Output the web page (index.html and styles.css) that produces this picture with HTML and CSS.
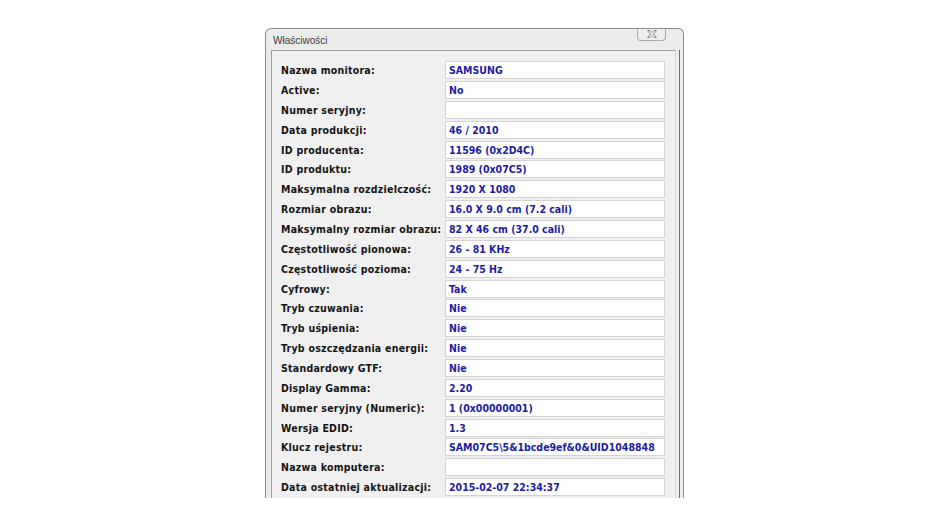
FILE: index.html
```html
<html>
<head>
    <link rel="stylesheet" href="styles.css">
    <title>Właściwości</title>
</head>
<body>
    <div class="page">
        <div class="window">
            <div class="titlebar">
                <span class="title">Właściwości</span>
                <div class="closebtn">
                    <svg width="12" height="10" viewBox="0 0 12 10">
                        <path d="M1.5 1.5 L4 1.5 L6 3.5 L8 1.5 L10.5 1.5 L7.5 5 L10.5 8.5 L8 8.5 L6 6.5 L4 8.5 L1.5 8.5 L4.5 5 Z" fill="none" stroke="#8a8a8a" stroke-width="1"/>
                    </svg>
                </div>
            </div>
            <div class="panel">
                <div class="props">
                    <div class="lbl">Nazwa monitora:</div><div class="val">SAMSUNG</div>
                    <div class="lbl">Active:</div><div class="val">No</div>
                    <div class="lbl">Numer seryjny:</div><div class="val"></div>
                    <div class="lbl">Data produkcji:</div><div class="val">46 / 2010</div>
                    <div class="lbl">ID producenta:</div><div class="val">11596 (0x2D4C)</div>
                    <div class="lbl">ID produktu:</div><div class="val">1989 (0x07C5)</div>
                    <div class="lbl">Maksymalna rozdzielczość:</div><div class="val">1920 X 1080</div>
                    <div class="lbl">Rozmiar obrazu:</div><div class="val">16.0 X 9.0 cm (7.2 cali)</div>
                    <div class="lbl">Maksymalny rozmiar obrazu:</div><div class="val">82 X 46 cm (37.0 cali)</div>
                    <div class="lbl">Częstotliwość pionowa:</div><div class="val">26 - 81 KHz</div>
                    <div class="lbl">Częstotliwość pozioma:</div><div class="val">24 - 75 Hz</div>
                    <div class="lbl">Cyfrowy:</div><div class="val">Tak</div>
                    <div class="lbl">Tryb czuwania:</div><div class="val">Nie</div>
                    <div class="lbl">Tryb uśpienia:</div><div class="val">Nie</div>
                    <div class="lbl">Tryb oszczędzania energii:</div><div class="val">Nie</div>
                    <div class="lbl">Standardowy GTF:</div><div class="val">Nie</div>
                    <div class="lbl">Display Gamma:</div><div class="val">2.20</div>
                    <div class="lbl">Numer seryjny (Numeric):</div><div class="val">1 (0x00000001)</div>
                    <div class="lbl">Wersja EDID:</div><div class="val">1.3</div>
                    <div class="lbl">Klucz rejestru:</div><div class="val">SAM07C5\5&amp;1bcde9ef&amp;0&amp;UID1048848</div>
                    <div class="lbl">Nazwa komputera:</div><div class="val"></div>
                    <div class="lbl">Data ostatniej aktualizacji:</div><div class="val">2015-02-07 22:34:37</div>
                </div>
            </div>
        </div>
    </div>
</body>
</html>
```

FILE: styles.css
```css
body
{
    margin: 0;
    background: #ffffff;
}
.page
{
    padding: 28px 0 0 265px;
    height: 520px;
    box-sizing: border-box;
    overflow: hidden;
}
.window
{
    width: 419px;
    height: 470px;
    box-sizing: border-box;
    background: #ececec;
    border: 1px solid #8c8c8c;
    border-bottom: none;
    border-radius: 6px 6px 0 0;
    padding: 0 7px 0 5px;
    overflow: hidden;
    display: flex;
    flex-direction: column;
}
.titlebar
{
    height: 22px;
    display: flex;
    justify-content: space-between;
    align-items: flex-start;
    padding-left: 2px;
}
.title
{
    font-family: "Liberation Sans", sans-serif;
    font-size: 10px;
    color: #3a3a3a;
    margin-top: 6px;
}
.closebtn
{
    width: 27px;
    height: 12px;
    margin-top: -1px;
    margin-right: 10px;
    border: 1px solid #a8a8a8;
    border-top: none;
    border-radius: 0 0 4px 4px;
    background: #eeeeee;
    display: flex;
    align-items: center;
    justify-content: center;
}
.panel
{
    flex: 1;
    background: #f0f0f0;
    border: 1px solid #a0a0a0;
    border-bottom: none;
    border-right: 1px solid #d8d8d8;
    box-shadow: 3px 0 0 #ececec, 4px 0 0 #707070;
    padding: 10px 0 0 9px;
}
.props
{
    display: grid;
    grid-template-columns: 164px 220px;
    grid-auto-rows: 19.86px;
}
.lbl
{
    font-family: "DejaVu Sans Condensed", "DejaVu Sans", sans-serif;
    font-stretch: condensed;
    font-weight: bold;
    font-size: 10.5px;
    letter-spacing: 0.25px;
    color: #141414;
    height: 18px;
    display: flex;
    align-items: center;
    white-space: nowrap;
}
.val
{
    font-family: "DejaVu Sans Condensed", "DejaVu Sans", sans-serif;
    font-stretch: condensed;
    font-weight: bold;
    font-size: 10.5px;
    color: #1c1ca0;
    background: #ffffff;
    border: 1px solid #d4d4d4;
    height: 18px;
    box-sizing: border-box;
    padding-left: 3px;
    display: flex;
    align-items: center;
    white-space: nowrap;
    overflow: hidden;
}
```
